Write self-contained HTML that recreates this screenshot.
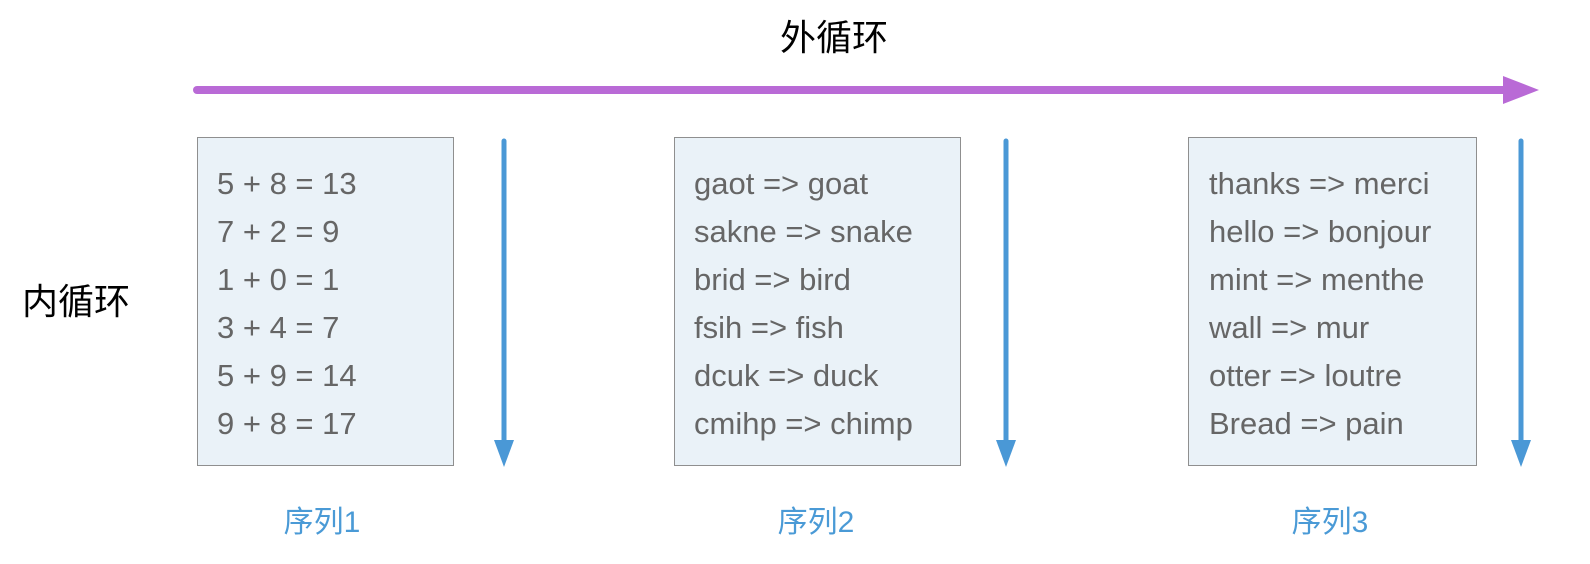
<!DOCTYPE html>
<html><head><meta charset="utf-8"><style>
body{margin:0;width:1590px;height:564px;background:#fff;position:relative;overflow:hidden;font-family:"Liberation Sans","Noto Sans CJK SC",sans-serif}
.box{position:absolute;top:137px;height:329px;background:#eaf2f8;border:1.5px solid #8f8f8f;box-sizing:border-box}
.t{position:absolute;font-size:31px;color:#666;line-height:48px;white-space:nowrap}
.lab{position:absolute;top:497px;font-size:30px;color:#4a9ad6;width:200px;text-align:center}
.cj{position:absolute;font-size:36px;color:#000;line-height:44px}
</style></head><body>
<div class="cj" style="left:780px;top:16px">外循环</div>
<div class="cj" style="left:22px;top:280px">内循环</div>
<svg width="1590" height="564" style="position:absolute;left:0;top:0">
<line x1="197" y1="90" x2="1508" y2="90" stroke="#b96ad6" stroke-width="8" stroke-linecap="round"/>
<polygon points="1503,76 1539,90 1503,104" fill="#b96ad6"/>
<g stroke="#4a98d6" stroke-width="5" stroke-linecap="round" fill="#4a98d6">
<line x1="504" y1="141" x2="504" y2="446"/><polygon stroke="none" points="494,440 514,440 504,467"/>
<line x1="1006" y1="141" x2="1006" y2="446"/><polygon stroke="none" points="996,440 1016,440 1006,467"/>
<line x1="1521" y1="141" x2="1521" y2="446"/><polygon stroke="none" points="1511,440 1531,440 1521,467"/>
</g></svg>
<div class="box" style="left:197px;width:257px"></div>
<div class="box" style="left:674px;width:287px"></div>
<div class="box" style="left:1188px;width:289px"></div>
<div class="t" style="left:217px;top:160px">5 + 8 = 13<br>7 + 2 = 9<br>1 + 0 = 1<br>3 + 4 = 7<br>5 + 9 = 14<br>9 + 8 = 17</div>
<div class="t" style="left:694px;top:160px">gaot =&gt; goat<br>sakne =&gt; snake<br>brid =&gt; bird<br>fsih =&gt; fish<br>dcuk =&gt; duck<br>cmihp =&gt; chimp</div>
<div class="t" style="left:1209px;top:160px">thanks =&gt; merci<br>hello =&gt; bonjour<br>mint =&gt; menthe<br>wall =&gt; mur<br>otter =&gt; loutre<br>Bread =&gt; pain</div>
<div class="lab" style="left:222px">序列1</div>
<div class="lab" style="left:716px">序列2</div>
<div class="lab" style="left:1230px">序列3</div>
</body></html>
